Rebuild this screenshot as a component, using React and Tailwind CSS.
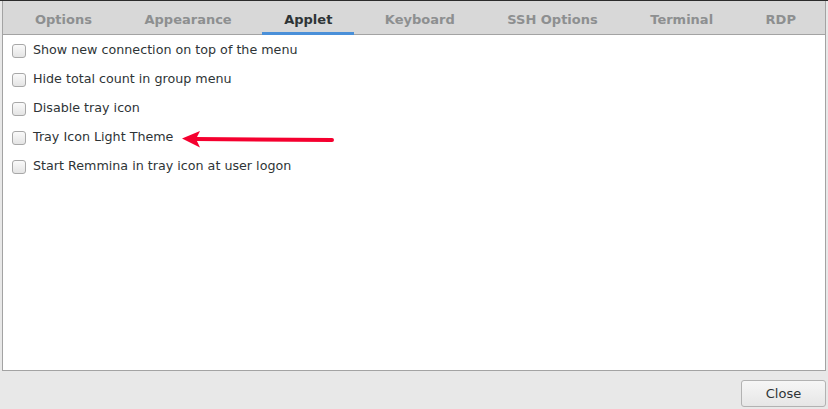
import React from "react";

const tabs = ["Options", "Appearance", "Applet", "Keyboard", "SSH Options", "Terminal", "RDP"];

const options = [
  "Show new connection on top of the menu",
  "Hide total count in group menu",
  "Disable tray icon",
  "Tray Icon Light Theme",
  "Start Remmina in tray icon at user logon",
];

const Checkbox = () => (
  <span className="mt-[2px] block h-[14px] w-[14px] rounded-[3px] border border-[#a8a8a8] bg-gradient-to-b from-[#fafafa] to-[#e4e4e4]" />
);

const App = () => {
  return (
    <div
      className="relative flex h-[409px] w-[828px] flex-col overflow-hidden border-t border-[#2b2b2b] bg-[#e8e8e8] text-[13px] text-[#2e3436]"
      style={{ fontFamily: '"DejaVu Sans", sans-serif' }}
    >
      <div className="ml-[2px] flex h-[370px] w-[824px] flex-col border-x border-b border-[#a3a3a3] bg-white">
        <div className="flex h-[34px] shrink-0 gap-[8.5px] border-b border-[#a3a3a3] bg-[#d8d8d8] pl-[10px]">
          {tabs.map((tab) => (
            <div
              key={tab}
              className={
                "relative flex h-full items-center px-[22px] pt-[4px] font-bold " +
                (tab === "Applet" ? "text-[#2e3436]" : "text-[#8d8f90]")
              }
            >
              {tab}
              {tab === "Applet" && (
                <div className="absolute inset-x-0 bottom-[-1px] h-[3px] bg-[#4a90d9]" />
              )}
            </div>
          ))}
        </div>
        <div className="flex flex-col text-[12.7px]">
          {options.map((opt) => (
            <div key={opt} className="flex h-[29px] items-center gap-[7px] pl-[9px]">
              <Checkbox />
              <span>{opt}</span>
            </div>
          ))}
        </div>
      </div>
      <div className="flex flex-1 items-end justify-end pb-[2px] pr-[2px]">
        <button className="h-[27px] w-[85px] rounded-[3px] border border-[#b2b2b2] bg-gradient-to-b from-[#f6f6f6] to-[#e6e6e6] text-[13px] text-[#2e3436]">
          Close
        </button>
      </div>
      <svg
        className="pointer-events-none absolute left-0 top-0"
        width="828"
        height="409"
        viewBox="0 0 828 409"
      >
        <line x1="195" y1="138" x2="332" y2="139" stroke="#f5002f" strokeWidth="4" strokeLinecap="round" />
        <polygon points="182,137.5 200,130 196,138 200,146.5" fill="#f5002f" />
      </svg>
    </div>
  );
};

export default App;
